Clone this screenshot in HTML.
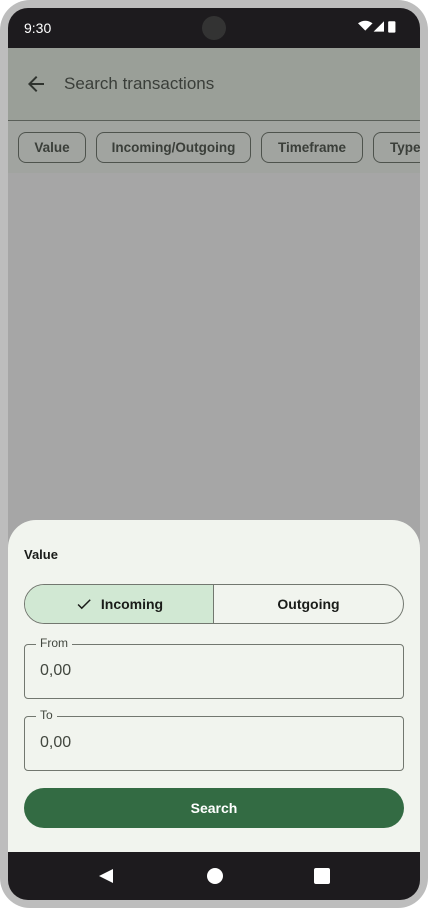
<!DOCTYPE html>
<html><head><style>
*{margin:0;padding:0;box-sizing:border-box}
body{width:428px;height:908px;background:#fff;font-family:"Liberation Sans",sans-serif;position:relative;overflow:hidden}
.frame{position:absolute;left:0;top:0;width:428px;height:908px;background:#bdbdbd;border-radius:30px}
.screen{position:absolute;left:8px;top:8px;width:412px;height:892px;border-radius:20px;overflow:hidden;background:#a6a6a6}
.status{position:absolute;left:0;top:0;width:412px;height:40px;background:#1d1b1e;color:#fff;font-size:14px}
.appbar{position:absolute;left:0;top:40px;width:412px;height:72px;background:#9a9f98}
.divider{position:absolute;left:0;top:112px;width:412px;height:1px;background:#5a5f59}
.chips{position:absolute;left:0;top:113px;width:412px;height:52px;background:#a1a4a0}
.chip{position:absolute;top:11px;height:31px;border:1px solid #4e534d;border-radius:8px;font-size:13.5px;font-weight:bold;color:#3a3e39;line-height:29px;text-align:center}
.sheet{position:absolute;left:0;top:512px;width:412px;height:332px;background:#f1f4ee;border-radius:28px 28px 0 0}
.nav{position:absolute;left:0;top:844px;width:412px;height:48px;background:#1d1b1e}
.field{position:absolute;left:16px;width:380px;height:55px;border:1px solid #72776f;border-radius:4px}
.field .lab{position:absolute;left:11px;top:-9px;background:#f1f4ee;padding:0 4px;font-size:12px;color:#42473f}
.field .val{position:absolute;left:15px;top:17px;font-size:16px;color:#42473f}
</style></head><body>
<div class="frame"></div>
<div class="screen">
 <div class="status"><span style="position:absolute;left:16px;top:12px">9:30</span>
  <div style="position:absolute;left:194px;top:8px;width:24px;height:24px;border-radius:50%;background:#333"></div>
  <svg style="position:absolute;left:350px;top:12px" width="52" height="17" viewBox="0 0 50 16"><path d="M0 3 Q7 -2 14 3 L7 10Z" fill="#fff"/><path d="M15 11 L25 1 L25 11Z" fill="#fff"/><rect x="29" y="1" width="7" height="11" rx="1" fill="#fff"/></svg>
 </div>
 <div class="appbar">
  <svg style="position:absolute;left:16px;top:24px" width="24" height="24" viewBox="0 0 24 24"><path d="M20 11H7.8l5.6-5.6L12 4l-8 8 8 8 1.4-1.4L7.8 13H20z" fill="#2f332e"/></svg>
  <span style="position:absolute;left:56px;top:26px;font-size:17px;color:#3a3e39">Search transactions</span>
 </div>
 <div class="divider"></div>
 <div class="chips">
  <div class="chip" style="left:10px;width:68px">Value</div>
  <div class="chip" style="left:88px;width:155px">Incoming/Outgoing</div>
  <div class="chip" style="left:253px;width:102px">Timeframe</div>
  <div class="chip" style="left:365px;width:70px;text-align:left;padding-left:16px">Type</div>
 </div>
 <div class="sheet">
  <div style="position:absolute;left:16px;top:27px;font-size:13px;font-weight:bold;color:#1a1c19">Value</div>
  <div style="position:absolute;left:16px;top:64px;width:380px;height:40px;border:1px solid #72776f;border-radius:20px;overflow:hidden;display:flex">
   <div style="width:189px;background:#d1e8d3;border-right:1px solid #72776f;display:flex;align-items:center;justify-content:center;font-size:14px;font-weight:bold;color:#1a1c19">
    <svg width="18" height="18" viewBox="0 0 24 24" style="margin-right:8px"><path d="M9 16.2 4.8 12l-1.4 1.4L9 19 21 7l-1.4-1.4z" fill="#1a1c19"/></svg>Incoming</div>
   <div style="flex:1;display:flex;align-items:center;justify-content:center;font-size:14px;font-weight:bold;color:#1a1c19">Outgoing</div>
  </div>
  <div class="field" style="top:124px"><span class="lab">From</span><span class="val">0,00</span></div>
  <div class="field" style="top:196px"><span class="lab">To</span><span class="val">0,00</span></div>
  <div style="position:absolute;left:16px;top:268px;width:380px;height:40px;border-radius:20px;background:#336b43;color:#fff;font-size:14px;font-weight:bold;text-align:center;line-height:40px">Search</div>
 </div>
 <div class="nav">
  <svg style="position:absolute;left:90px;top:16px" width="16" height="16" viewBox="0 0 16 16"><path d="M15 1 L15 15 L1 8Z" fill="#fff"/></svg>
  <div style="position:absolute;left:199px;top:16px;width:16px;height:16px;border-radius:50%;background:#fff"></div>
  <div style="position:absolute;left:306px;top:16px;width:16px;height:16px;border-radius:2px;background:#fff"></div>
 </div>
</div>
</body></html>
